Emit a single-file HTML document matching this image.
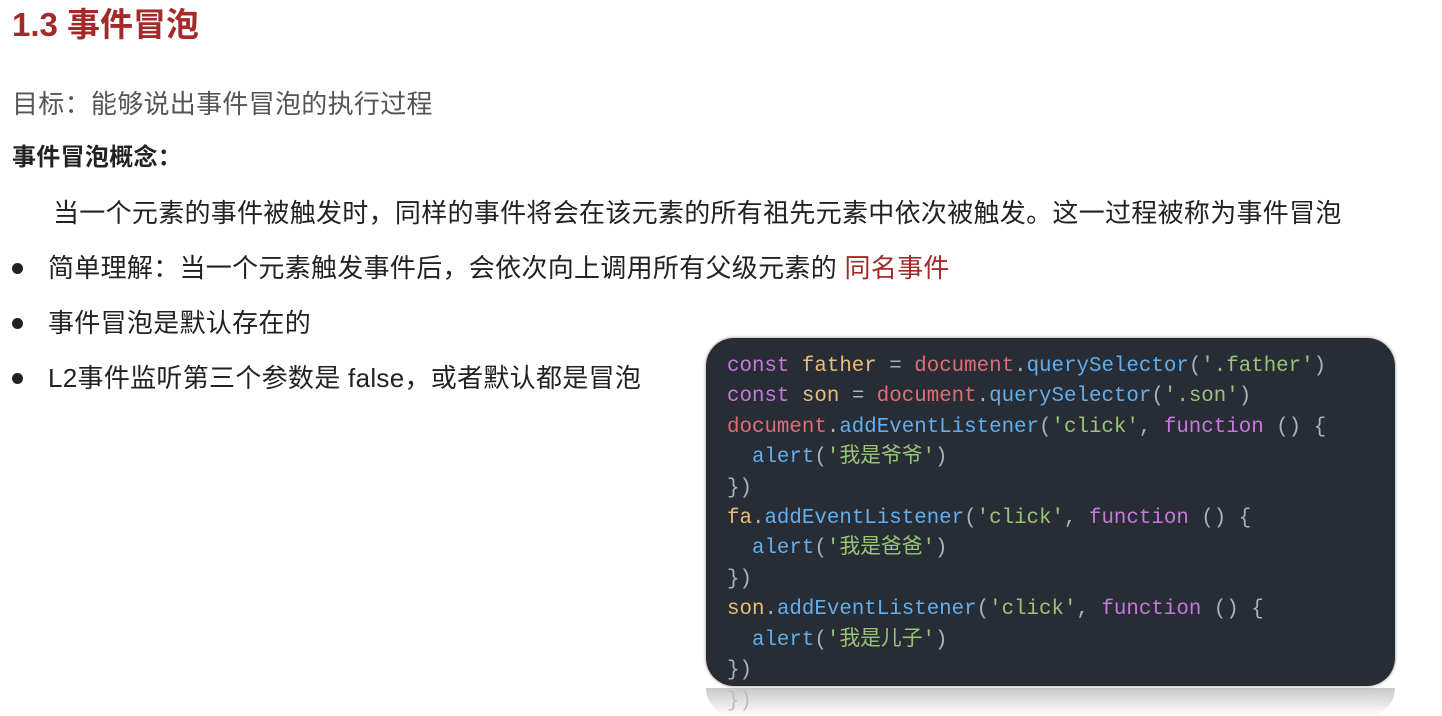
<!DOCTYPE html><html><head><meta charset="utf-8"><style>
body{margin:0;width:1442px;height:716px;background:#fff;position:relative;overflow:hidden;font-family:"Liberation Sans","Noto Sans CJK SC",sans-serif;}
.t{position:absolute;white-space:nowrap;font-size:26px;color:#222;line-height:30px;letter-spacing:0.3px}
.dot{position:absolute;left:12px;width:11px;height:11px;border-radius:50%;background:#222}
.code{position:absolute;left:706px;top:338px;width:689px;height:348px;background:#282c34;border-radius:28px;box-shadow:0 0 3px #888}
.code pre{margin:0;position:absolute;left:21px;top:14px;font-family:"Liberation Mono","Noto Sans CJK SC",monospace;font-size:20.8px;line-height:30.4px;color:#abb2bf}
.k{color:#c678dd}.v{color:#e5c07b}.r{color:#e06c75}.f{color:#61afef}.s{color:#98c379}
.refl{position:absolute;left:706px;top:688px;width:689px;height:28px;border-radius:0 0 28px 28px;background:linear-gradient(#c8c8c8,#fff)}
</style></head><body>
<div class="t" style="left:12px;top:10px;font-size:33px;font-weight:bold;color:#a42a2a;letter-spacing:0">1.3 事件冒泡</div>
<div class="t" style="left:12px;top:89px;color:#555">目标：能够说出事件冒泡的执行过程</div>
<div class="t" style="left:12px;top:143px;font-weight:bold;font-size:24px">事件冒泡概念：</div>
<div class="t" style="left:53px;top:198px">当一个元素的事件被触发时，同样的事件将会在该元素的所有祖先元素中依次被触发。这一过程被称为事件冒泡</div>
<div class="dot" style="top:263px"></div>
<div class="t" style="left:48px;top:253px">简单理解：当一个元素触发事件后，会依次向上调用所有父级元素的 <span style="color:#a42a2a">同名事件</span></div>
<div class="dot" style="top:318px"></div>
<div class="t" style="left:48px;top:308px">事件冒泡是默认存在的</div>
<div class="dot" style="top:373px"></div>
<div class="t" style="left:48px;top:363px">L2事件监听第三个参数是 false，或者默认都是冒泡</div>
<div class="refl"><span style="position:absolute;left:21px;top:2px;font-family:'Liberation Mono',monospace;font-size:20.8px;color:#bbb">})</span></div>
<div class="code"><pre><span class="k">const</span> <span class="v">father</span> = <span class="r">document</span>.<span class="f">querySelector</span>(<span class="s">'.father'</span>)
<span class="k">const</span> <span class="v">son</span> = <span class="r">document</span>.<span class="f">querySelector</span>(<span class="s">'.son'</span>)
<span class="r">document</span>.<span class="f">addEventListener</span>(<span class="s">'click'</span>, <span class="k">function</span> () {
  <span class="f">alert</span>(<span class="s">'我是爷爷'</span>)
})
<span class="v">fa</span>.<span class="f">addEventListener</span>(<span class="s">'click'</span>, <span class="k">function</span> () {
  <span class="f">alert</span>(<span class="s">'我是爸爸'</span>)
})
<span class="v">son</span>.<span class="f">addEventListener</span>(<span class="s">'click'</span>, <span class="k">function</span> () {
  <span class="f">alert</span>(<span class="s">'我是儿子'</span>)
})</pre></div>
</body></html>
